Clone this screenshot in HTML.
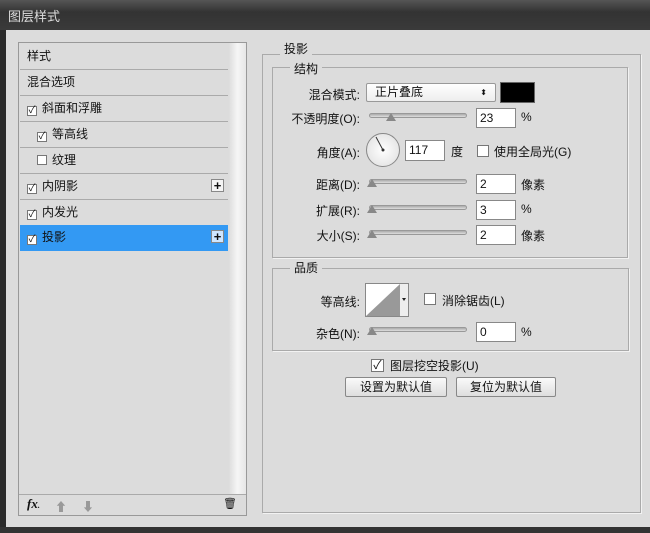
<!DOCTYPE html>
<html><head><meta charset="utf-8"><style>
*{margin:0;padding:0;box-sizing:border-box}
body{width:650px;height:533px;overflow:hidden;background:#d6d6d6;font-family:"Liberation Sans","Noto Sans CJK SC",sans-serif;font-size:12px;color:#111;position:relative}
.a{position:absolute}
.title{left:0;top:0;width:650px;height:30px;background:linear-gradient(#555,#333 40%,#3a3a3a);color:#ddd;font-size:13px;padding:6px 8px}
.frame{left:0;top:30px;width:650px;height:503px;background:#dcdcdc;border-left:6px solid #2a2a2a}
.bot{left:0;top:527px;width:650px;height:6px;background:#333}
.row{left:20px;width:208px;height:26px;border-bottom:1px solid #aaa;padding:0 0 0 7px;font-size:12px;line-height:25px}
.cb{display:inline-block;width:10px;height:10px;border:1px solid #777;background:#fff;vertical-align:-1px;margin-right:5px;font-size:10px;line-height:8px;text-align:center}
.plus{right:4px;top:5px;width:13px;height:13px;border:1px solid #888;background:#f4f4f4;font-size:13px;line-height:11px;text-align:center;font-weight:bold}
.grp{border:1px solid #aaa;box-shadow:1px 1px 0 #f2f2f2}
.leg{background:#dcdcdc;padding:0 4px;font-size:12px}
.lbl{text-align:right;width:92px;font-size:12px}
.inp{width:40px;height:20px;background:#fff;border:1px solid #888;padding:0 3px;font-size:12px;line-height:18px}
.sl{width:98px;height:5px;border:1px solid #999;border-radius:3px;background:linear-gradient(#aaa,#ddd)}
.th{width:0;height:0;border-left:5px solid transparent;border-right:5px solid transparent;border-bottom:8px solid #888}
.btn{height:20px;border:1px solid #888;background:linear-gradient(#fafafa,#dedede);text-align:center;font-size:12px;line-height:18px;border-radius:2px}
</style></head><body>
<div class="a title">图层样式</div>
<div class="a frame"></div>
<div class="a bot"></div>

<div class="a" style="left:18px;top:42px;width:229px;height:474px;border:1px solid #999;background:#dcdcdc"></div>
<div class="a" style="left:229px;top:43px;width:17px;height:452px;background:linear-gradient(90deg,#ddd,#f6f6f6,#e6e6e6)"></div>
<div class="a row" style="top:44px">样式</div>
<div class="a row" style="top:70px">混合选项</div>
<div class="a row" style="top:96px"><span class="cb">✓</span>斜面和浮雕</div>
<div class="a row" style="top:122px;padding-left:17px"><span class="cb">✓</span>等高线</div>
<div class="a row" style="top:148px;padding-left:17px"><span class="cb"></span>纹理</div>
<div class="a row" style="top:174px"><span class="cb">✓</span>内阴影<div class="a plus">+</div></div>
<div class="a row" style="top:200px"><span class="cb">✓</span>内发光</div>
<div class="a row" style="top:225px;background:#3399f3;border-bottom:none"><span class="cb">✓</span>投影<div class="a plus" style="background:#cfe6ff">+</div></div>
<div class="a" style="left:19px;top:494px;width:227px;height:1px;background:#aaa"></div>
<div class="a" style="left:27px;top:496px;font-style:italic;font-weight:bold;font-family:'Liberation Serif',serif;font-size:13px">fx<span style="font-size:8px">.</span></div>
<div class="a" style="left:55px;top:498px;color:#999;font-size:12px">⬆</div>
<div class="a" style="left:82px;top:498px;color:#999;font-size:12px">⬇</div>
<div class="a" style="left:223px;top:497px;font-size:11px">🗑</div>

<div class="a grp" style="left:262px;top:54px;width:379px;height:459px"></div>
<div class="a leg" style="left:280px;top:40px">投影</div>
<div class="a grp" style="left:272px;top:67px;width:356px;height:191px"></div>
<div class="a leg" style="left:290px;top:60px">结构</div>

<div class="a lbl" style="left:268px;top:86px">混合模式:</div>
<div class="a" style="left:366px;top:83px;width:130px;height:19px;border:1px solid #999;border-radius:2px;background:linear-gradient(#fff,#eee);padding:0 8px;line-height:17px">正片叠底<span style="float:right;font-size:8px">⬍</span></div>
<div class="a" style="left:500px;top:82px;width:35px;height:21px;background:#000;border:1px solid #666"></div>

<div class="a lbl" style="left:268px;top:110px">不透明度(O):</div>
<div class="a sl" style="left:369px;top:113px"></div><div class="a th" style="left:386px;top:113px"></div>
<div class="a inp" style="left:476px;top:108px">23</div><div class="a" style="left:521px;top:110px">%</div>

<div class="a lbl" style="left:268px;top:144px">角度(A):</div>
<div class="a" style="left:366px;top:133px;width:34px;height:34px;border-radius:50%;border:1px solid #888;background:radial-gradient(#fff,#ddd)"></div>
<svg class="a" style="left:366px;top:133px" width="34" height="34"><line x1="17" y1="17" x2="10" y2="4" stroke="#333" stroke-width="1"/><circle cx="17" cy="17" r="1.5" fill="#333"/></svg>
<div class="a inp" style="left:405px;top:140px;height:21px">117</div>
<div class="a" style="left:451px;top:143px">度</div>
<div class="a cb" style="left:477px;top:145px;width:12px;height:12px"></div>
<div class="a" style="left:494px;top:143px">使用全局光(G)</div>

<div class="a lbl" style="left:268px;top:176px">距离(D):</div>
<div class="a sl" style="left:369px;top:179px"></div><div class="a th" style="left:367px;top:179px"></div>
<div class="a inp" style="left:476px;top:174px">2</div><div class="a" style="left:521px;top:176px">像素</div>
<div class="a lbl" style="left:268px;top:202px">扩展(R):</div>
<div class="a sl" style="left:369px;top:205px"></div><div class="a th" style="left:367px;top:205px"></div>
<div class="a inp" style="left:476px;top:200px">3</div><div class="a" style="left:521px;top:202px">%</div>
<div class="a lbl" style="left:268px;top:227px">大小(S):</div>
<div class="a sl" style="left:369px;top:230px"></div><div class="a th" style="left:367px;top:230px"></div>
<div class="a inp" style="left:476px;top:225px">2</div><div class="a" style="left:521px;top:227px">像素</div>

<div class="a grp" style="left:272px;top:268px;width:357px;height:83px"></div>
<div class="a leg" style="left:290px;top:259px">品质</div>
<div class="a lbl" style="left:268px;top:293px">等高线:</div>
<div class="a" style="left:365px;top:283px;width:44px;height:34px;border:1px solid #888;background:#fff"></div>
<svg class="a" style="left:366px;top:284px" width="42" height="32"><polygon points="0,32 34,0 34,32" fill="#999"/><rect x="34" y="0" width="8" height="32" fill="#eee"/><polygon points="36,14 40,14 38,17" fill="#222"/></svg>
<div class="a cb" style="left:424px;top:293px;width:12px;height:12px"></div>
<div class="a" style="left:442px;top:292px">消除锯齿(L)</div>
<div class="a lbl" style="left:268px;top:325px">杂色(N):</div>
<div class="a sl" style="left:369px;top:327px"></div><div class="a th" style="left:367px;top:327px"></div>
<div class="a inp" style="left:476px;top:322px">0</div><div class="a" style="left:521px;top:325px">%</div>

<div class="a cb" style="left:371px;top:359px;width:13px;height:13px;font-size:12px;line-height:11px">✓</div>
<div class="a" style="left:390px;top:357px">图层挖空投影(U)</div>
<div class="a btn" style="left:345px;top:377px;width:102px">设置为默认值</div>
<div class="a btn" style="left:456px;top:377px;width:100px">复位为默认值</div>
</body></html>
